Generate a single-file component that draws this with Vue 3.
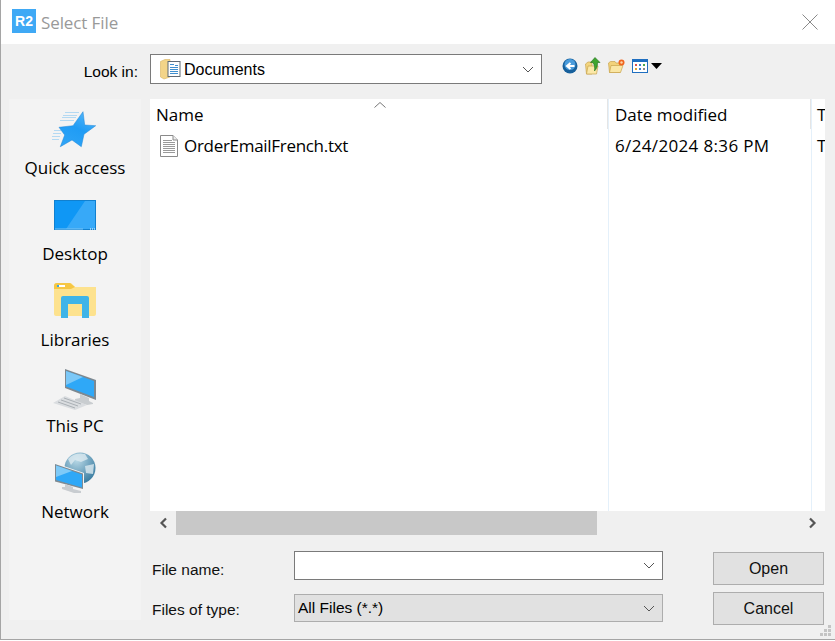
<template>
  <div class="dialog">
    <header class="titlebar">
      <div class="app-logo">R2</div>
      <span class="title">Select File</span>
      <svg class="close" width="18" height="18" viewBox="0 0 18 18">
        <path d="M1.500 1.500L16.500 16.500M16.500 1.500L1.500 16.500" stroke="#8a8a8a" stroke-width="1" fill="none" />
      </svg>
    </header>

    <div class="toolbar">
      <label class="lookin-label">Look in:</label>
      <div class="lookin-box">
        <svg width="24" height="22" viewBox="0 0 24 22">
          <path d="M0.500 3.500L5 1.500L10 1.500L10 19L4 21L0.500 19Z" fill="#f3d488" stroke="#d9b45f" stroke-width="0.600" />
          <rect x="8" y="3.500" width="12" height="15" fill="#fdfdfd" stroke="#5f6a75" stroke-width="1" />
          <path d="M10 6.500H14M15 7.500H18M10 9.500H18M10 11.500H18M10 13.500H18M10 15.500H18" stroke="#3f8fd0" stroke-width="1" />
        </svg>
        <span class="lookin-value">Documents</span>
        <svg class="chev lookin-chev" width="12" height="7" viewBox="0 0 12 7">
          <path d="M1 1L6 6L11 1" stroke="#555" stroke-width="1" fill="none" />
        </svg>
      </div>
      <div class="tools">
        <svg width="16" height="16" viewBox="0 0 16 16">
          <circle cx="8" cy="8" r="7.500" fill="#17609c" />
          <circle cx="8" cy="6.500" r="5.500" fill="#4a9cdc" />
          <path d="M12.500 8H6M8.500 5L5 8L8.500 11" stroke="#fff" stroke-width="2" fill="none" />
        </svg>
        <svg width="16" height="18" viewBox="0 0 16 18">
          <path d="M0.500 7L3 5H7V17H1.500Z" fill="#f3d57f" stroke="#c9a44e" stroke-width="0.700" />
          <path d="M3 9H13L11.500 17H1.500Z" fill="#fbe8a8" stroke="#c9a44e" stroke-width="0.700" />
          <path d="M10 0.500L15 5.500H12.500C12.500 9 12 11.500 9.500 14C10 11 9.500 8 8 5.500H5.500Z" fill="#3fa52f" stroke="#1f6d1a" stroke-width="0.600" />
        </svg>
        <svg width="17" height="15" viewBox="0 0 17 15">
          <path d="M0.500 4L2.500 2.500H7L8 4H12V13.500H1.500Z" fill="#f2d27a" stroke="#c9a44e" stroke-width="0.700" />
          <path d="M3 6.500H15L12.500 13.500H1.500Z" fill="#fae6a4" stroke="#c9a44e" stroke-width="0.700" />
          <circle cx="13.500" cy="3.500" r="3" fill="#f0641e" />
          <circle cx="13.500" cy="3.500" r="1.200" fill="#fbd6a8" />
        </svg>
        <span class="view-btn">
          <svg width="16" height="14" viewBox="0 0 16 14">
            <rect x="0.500" y="0.500" width="15" height="13" fill="#fff" stroke="#1f6fc0" />
            <rect x="1" y="1" width="14" height="2" fill="#1f6fc0" />
            <rect x="3" y="5" width="2" height="2" fill="#d9534f" />
            <rect x="7" y="5" width="2" height="2" fill="#3a7fd0" />
            <rect x="11" y="5" width="2" height="2" fill="#4aa84a" />
            <rect x="3" y="9" width="2" height="2" fill="#e0a030" />
            <rect x="7" y="9" width="2" height="2" fill="#3a7fd0" />
            <rect x="11" y="9" width="2" height="2" fill="#888" />
          </svg>
          <svg width="11" height="6" viewBox="0 0 11 6">
            <path d="M0 0H11L5.500 6Z" fill="#000" />
          </svg>
        </span>
      </div>
    </div>

    <div class="middle">
      <aside class="places">
        <div v-for="place in places" :key="place.label" class="place">
          <span class="place-icon">
            <svg v-if="place.icon === 'star'" width="46" height="37" viewBox="0 0 46 37">
              <defs>
                <linearGradient id="starFill" x1="0.800" y1="0" x2="0.300" y2="1">
                  <stop offset="0" stop-color="#57b7f8" />
                  <stop offset="0.500" stop-color="#1f9cf5" />
                  <stop offset="1" stop-color="#2ea4f6" />
                </linearGradient>
              </defs>
              <path d="M13 1.500H27M11 4.500H25M10 6.500H24M8 9.500H22M2 19.500H9M1 22.500H9M0 25.500H8M0 28.500H7" stroke="#b4d9f2" stroke-width="1" />
              <path d="M31 0.700L32.700 14L43.700 14.700L32 23.300L29.300 35.700L20 29L8.300 35.700L12.700 24L7 16.300L21 14.700Z" fill="url(#starFill)" stroke="#1b84d8" stroke-width="0.500" />
            </svg>
            <svg v-else-if="place.icon === 'desktop'" width="42" height="30" viewBox="0 0 42 30">
              <rect x="0" y="0" width="42" height="30" fill="#0f97f5" />
              <path d="M12 29L31 1H41V29Z" fill="#37a9f8" />
              <rect x="0.500" y="0.500" width="41" height="29" fill="none" stroke="#1180cf" />
              <path d="M1 29H29" stroke="#7cc4f5" />
              <path d="M36 29H41" stroke="#fff" stroke-dasharray="1 1" />
            </svg>
            <svg v-else-if="place.icon === 'libraries'" width="42" height="36" viewBox="0 0 42 36">
              <path d="M0 3Q0 0 3 0H17L21 4H42V31Q42 33 40 33H2Q0 33 0 31Z" fill="#fde28e" />
              <path d="M0 3Q0 0 3 0H16L21 4L17 6H0Z" fill="#f6c744" />
              <rect x="3" y="2" width="2" height="2" fill="#3aa7e6" />
              <rect x="5" y="2" width="6" height="2" fill="#fff" />
              <path d="M7 35V15Q7 13 9 13H33Q35 13 35 15V35H28V21H14V35Z" fill="#3eb4e8" />
            </svg>
            <svg v-else-if="place.icon === 'pc'" class="pc-icon" width="44" height="42" viewBox="0 0 44 42">
              <path d="M12 1L43 12V32L12 20Z" fill="#7d8890" />
              <path d="M13 3L41 13V29L13 18.500Z" fill="#2fa8f7" />
              <path d="M13 3L30 9L13 17Z" fill="#7cc8f7" />
              <path d="M27 26L36 30V33L40 35V36L34 37L22 33V31L27 30Z" fill="#c9cdd0" />
              <path d="M12 28L24 33L34 37L22 42L0 35Z" fill="#dadde0" />
              <path d="M5 34L22 40M8 32L25 38M11 30L28 36" stroke="#aab0b5" stroke-width="1" />
            </svg>
            <svg v-else width="41" height="42" viewBox="0 0 41 42">
              <defs>
                <radialGradient id="globeFill" cx="0.400" cy="0.250" r="0.850">
                  <stop offset="0" stop-color="#b8d8e6" />
                  <stop offset="1" stop-color="#2c7299" />
                </radialGradient>
              </defs>
              <circle cx="25" cy="16" r="15.500" fill="url(#globeFill)" />
              <path d="M13 7Q20 0 30 2L33 7L26 10L20 8L16 13ZM30 14L39 12L38 22L31 21Z" fill="#dceaf0" opacity="0.800" />
              <path d="M0 11L29 21V38L0 30Z" fill="#f2f4f5" />
              <path d="M0 12L28 21.500V37L0 29.500Z" fill="#7f8a92" />
              <path d="M1 13.500L27 22.500V35.500L1 28Z" fill="#2fa8f7" />
              <path d="M1 13.500L17 19L1 25Z" fill="#7fcaf7" />
              <path d="M10 32L18 35V37L26 39V41H19L7 37V35L10 35Z" fill="#c8ccd0" />
            </svg>
          </span>
          <span class="place-label">{{ place.label }}</span>
        </div>
      </aside>

      <section class="browser">
        <div class="list">
          <div class="list-head">
            <div class="col col-name">
              Name
              <svg class="sort" width="12" height="6" viewBox="0 0 12 6">
                <path d="M0.500 5.500L6 0.500L11.500 5.500" stroke="#777" stroke-width="1" fill="none" />
              </svg>
            </div>
            <div class="col col-date">Date modified</div>
            <div class="col col-type">T</div>
          </div>
          <div class="list-body">
            <div class="col col-name file-name">
              <svg width="18" height="22" viewBox="0 0 18 22">
                <path d="M0.500 0.500H13L17.500 5V21.500H0.500Z" fill="#fff" stroke="#8a8a8a" />
                <path d="M13 0.500V5H17.500" fill="#eee" stroke="#8a8a8a" />
                <path d="M3 5.500H12M3 7.500H15M3 9.500H15M3 11.500H15M3 13.500H15M3 15.500H15M3 17.500H15" stroke="#9a9a9a" />
              </svg>
              <span class="file-text">OrderEmailFrench.txt</span>
            </div>
            <div class="col col-date date-value">6/24/2024 8:36 PM</div>
            <div class="col col-type">T</div>
          </div>
        </div>
        <div class="hscroll">
          <svg class="scroll-arrow" width="9" height="12" viewBox="0 0 9 12">
            <path d="M7 1.500L2.500 6L7 10.500" stroke="#555" stroke-width="2.200" fill="none" />
          </svg>
          <div class="scroll-track"><div class="scroll-thumb"></div></div>
          <svg class="scroll-arrow" width="9" height="12" viewBox="0 0 9 12">
            <path d="M2 1.500L6.500 6L2 10.500" stroke="#555" stroke-width="2.200" fill="none" />
          </svg>
        </div>
        <div class="form">
          <label class="form-label">File name:</label>
          <div class="combo combo-input">
            <svg class="chev" width="12" height="7" viewBox="0 0 12 7">
              <path d="M1 1L6 6L11 1" stroke="#555" stroke-width="1" fill="none" />
            </svg>
          </div>
          <button class="btn">Open</button>
          <label class="form-label">Files of type:</label>
          <div class="combo combo-select">
            <span>All Files (*.*)</span>
            <svg class="chev" width="12" height="7" viewBox="0 0 12 7">
              <path d="M1 1L6 6L11 1" stroke="#555" stroke-width="1" fill="none" />
            </svg>
          </div>
          <button class="btn">Cancel</button>
        </div>
      </section>
    </div>

    <svg class="grip" width="12" height="12" viewBox="0 0 12 12">
      <path d="M8 0h3v3H8zM4 4h3v3H4zM8 4h3v3H8zM0 8h3v3H0zM4 8h3v3H4zM8 8h3v3H8z" fill="#c4c4c4" />
    </svg>
  </div>
</template>

<script setup>
  const places = [
    { label: 'Quick access', icon: 'star' },
    { label: 'Desktop', icon: 'desktop' },
    { label: 'Libraries', icon: 'libraries' },
    { label: 'This PC', icon: 'pc' },
    { label: 'Network', icon: 'network' },
  ]
</script>

<style scoped>
  .dialog {
    position: relative;
    box-sizing: border-box;
    width: 835px;
    height: 640px;
    background: #f0f0f0;
    border-left: 1px solid #a5a5a5;
    border-bottom: 1px solid #a5a5a5;
    font-family: 'Liberation Sans', Arial, sans-serif;
    color: #000;
    overflow: hidden;
  }

  .titlebar {
    display: flex;
    align-items: center;
    height: 44px;
    background: #fff;
    padding-left: 11px;
  }

  .app-logo {
    width: 24px;
    height: 24px;
    margin-bottom: 2px;
    background: #3fa9f5;
    color: #fff;
    font-weight: 700;
    font-size: 14px;
    line-height: 24px;
    text-align: center;
  }

  .title {
    margin-left: 5px;
    font-family: 'Open Sans', sans-serif;
    font-size: 17px;
    letter-spacing: -0.100px;
    color: #999;
  }

  .close {
    margin-left: auto;
    margin-right: 16px;
    margin-bottom: 1px;
  }

  .toolbar {
    display: flex;
    align-items: flex-start;
    height: 55px;
    padding-top: 10px;
    box-sizing: border-box;
  }

  .lookin-label {
    width: 137px;
    text-align: right;
    font-size: 15.500px;
    line-height: 36px;
  }

  .lookin-box {
    display: flex;
    align-items: center;
    box-sizing: border-box;
    width: 392px;
    height: 30px;
    margin-left: 12px;
    padding-left: 9px;
    background: #fff;
    border: 1px solid #7a7a7a;
  }

  .lookin-value {
    margin-left: 0;
    padding-top: 1px;
    font-size: 16px;
  }

  .chev {
    margin-left: auto;
    flex: none;
  }

  .lookin-chev {
    margin-right: 7px;
  }

  .tools {
    display: flex;
    align-items: center;
    gap: 7px;
    height: 22px;
    margin-top: 1px;
    margin-left: 20px;
  }

  .view-btn {
    display: flex;
    align-items: center;
    gap: 3px;
  }

  .middle {
    display: flex;
    height: 540px;
  }

  .places {
    width: 132px;
    height: 521px;
    margin-left: 8px;
    background: #f3f3f3;
    flex: none;
    display: flex;
    flex-direction: column;
  }

  .place {
    display: flex;
    flex-direction: column;
    align-items: center;
    justify-content: flex-end;
    height: 86px;
    padding-bottom: 5px;
    box-sizing: border-box;
    flex: none;
  }

  .place-icon {
    display: flex;
    align-items: center;
    justify-content: center;
    height: 38px;
    margin-bottom: 8px;
  }

  .pc-icon {
    margin-top: 4px;
  }

  .place-label {
    font-family: 'Open Sans', sans-serif;
    font-size: 17px;
    line-height: 24px;
    color: #000;
  }

  .browser {
    flex: 1;
    margin-left: 9px;
    min-width: 0;
  }

  .list {
    width: 675px;
    height: 412px;
    background: #fff;
    display: grid;
    grid-template-rows: 30px 1fr;
    background-image: linear-gradient(#e4f0fa, #e4f0fa), linear-gradient(#e4f0fa, #e4f0fa);
    background-repeat: no-repeat;
    background-size: 1px 100%, 1px 100%;
    background-position: 458px 0, 661px 0;
  }

  .list-head,
  .list-body {
    display: grid;
    grid-template-columns: 458px 203px 14px;
    font-family: 'Open Sans', sans-serif;
    font-size: 17px;
    color: #000;
  }

  .list-head .col {
    height: 30px;
    line-height: 31px;
    position: relative;
    border-right: 1px solid #e5e5e5;
    box-sizing: border-box;
  }

  .list-head .col-type {
    border-right: none;
  }

  .list-body {
    align-content: start;
  }

  .list-body .col {
    line-height: 33px;
  }

  .col {
    padding-left: 6px;
    overflow: hidden;
    white-space: nowrap;
  }

  .col-date {
    padding-left: 7px;
  }

  .date-value {
    letter-spacing: 0.350px;
  }

  .sort {
    position: absolute;
    left: 224px;
    top: 3px;
  }

  .file-name {
    display: flex;
    align-items: center;
    gap: 6px;
    padding-left: 10px;
    height: 33px;
  }

  .file-text {
    letter-spacing: -0.300px;
  }

  .hscroll {
    display: flex;
    align-items: center;
    height: 24px;
    width: 675px;
  }

  .scroll-arrow {
    flex: none;
    margin: 0 8px 0 9px;
  }

  .scroll-track {
    flex: 1;
    height: 24px;
  }

  .scroll-thumb {
    width: 421px;
    height: 100%;
    background: #c8c8c8;
  }

  .form {
    display: grid;
    grid-template-columns: 142px 369px 111px;
    grid-template-rows: 33px 33px;
    row-gap: 7px;
    margin-top: 17px;
    margin-left: 2px;
    align-items: start;
  }

  .form-label {
    align-self: center;
    font-size: 15.500px;
    color: #111;
    position: relative;
    top: 1px;
  }

  .combo {
    display: flex;
    align-items: center;
    box-sizing: border-box;
    font-size: 15.500px;
    padding: 0 7px 0 3px;
  }

  .combo-input {
    height: 29px;
    margin-top: -1px;
    background: #fff;
    border: 1px solid #7a7a7a;
  }

  .combo-select {
    height: 28px;
    margin-top: 2px;
    background: #e1e1e1;
    border: 1px solid #adadad;
  }

  .btn {
    box-sizing: border-box;
    width: 111px;
    height: 33px;
    margin-left: 50px;
    background: #e1e1e1;
    border: 1px solid #adadad;
    font-family: inherit;
    font-size: 16px;
    color: #111;
    padding: 0;
  }

  .grip {
    position: absolute;
    right: 3px;
    bottom: 2px;
  }
</style>
